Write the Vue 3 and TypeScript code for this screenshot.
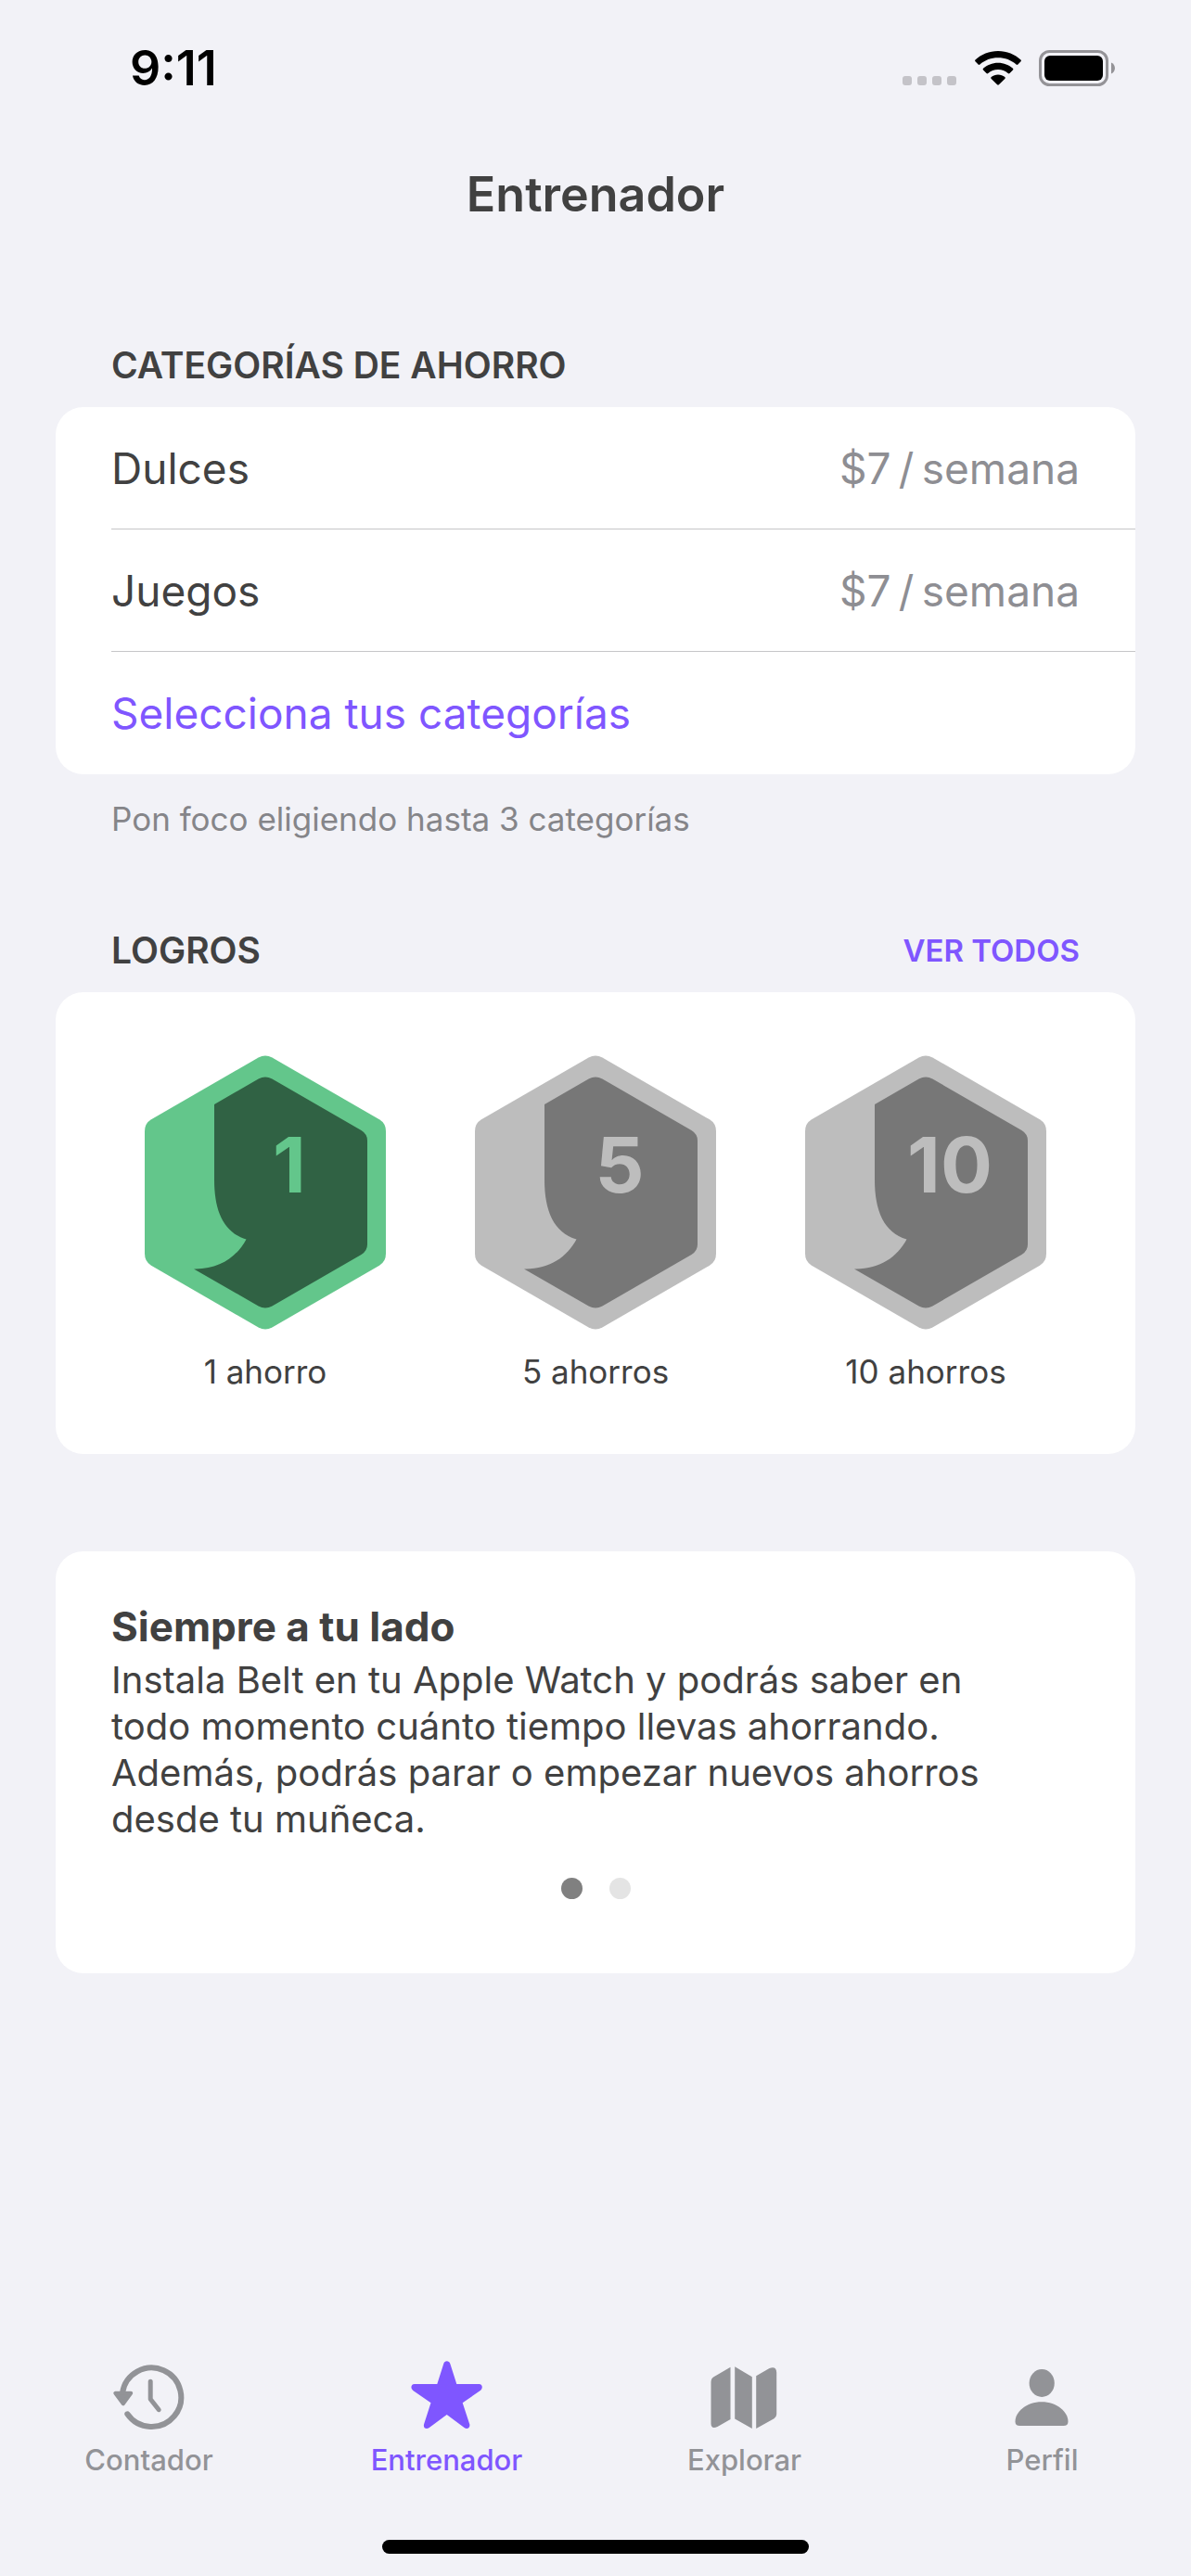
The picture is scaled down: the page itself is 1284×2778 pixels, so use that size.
<script setup lang="ts">
import { ref } from 'vue'

interface Category {
  name: string
  amount: string
}

interface Achievement {
  count: number
  label: string
  unlocked: boolean
}

interface Tip {
  title: string
  body: string
}

type TabIcon = 'history' | 'star' | 'map' | 'person'

interface Tab {
  label: string
  icon: TabIcon
}

// Amounts are set with thin spaces around the slash.
const categories: Category[] = [
  { name: 'Dulces', amount: '$7\u2009/\u2009semana' },
  { name: 'Juegos', amount: '$7\u2009/\u2009semana' },
]

const achievements: Achievement[] = [
  { count: 1, label: '1 ahorro', unlocked: true },
  { count: 5, label: '5 ahorros', unlocked: false },
  { count: 10, label: '10 ahorros', unlocked: false },
]

const tip: Tip = {
  title: 'Siempre a tu lado',
  body: 'Instala Belt en tu Apple Watch y podrás saber en todo momento cuánto tiempo llevas ahorrando. Además, podrás parar o empezar nuevos ahorros desde tu muñeca.',
}

const tabs: Tab[] = [
  { label: 'Contador', icon: 'history' },
  { label: 'Entrenador', icon: 'star' },
  { label: 'Explorar', icon: 'map' },
  { label: 'Perfil', icon: 'person' },
]

const currentTab = ref('Entrenador')
const currentPage = ref(0)
</script>

<template>
  <div class="screen">
    <div class="status-bar">
      <span class="clock">9:11</span>
      <div class="status-icons">
        <span class="signal"><i></i><i></i><i></i><i></i></span>
        <svg class="wifi" viewBox="0 0 50 37" aria-hidden="true">
          <path d="M25 0C34.500 0 43.200 3.600 49.500 9.500Q50.300 10.400 49.500 11.300L46.400 14.500Q45.500 15.300 44.600 14.500C39.300 9.700 32.500 7.200 25 7.200S10.700 9.700 5.400 14.500Q4.500 15.300 3.600 14.500L.5 11.300Q-.3 10.400 .5 9.500C6.800 3.600 15.500 0 25 0Z" />
          <path d="M25 12.700C31.200 12.700 36.800 15 41 18.800Q41.900 19.700 41 20.600L37.500 24Q36.600 24.800 35.700 24C32.800 21.500 29.200 20 25 20S17.200 21.500 14.300 24Q13.400 24.800 12.500 24L9 20.600Q8.100 19.700 9 18.800C13.200 15 18.800 12.700 25 12.700Z" />
          <path d="M25 25.500C27.800 25.500 30.300 26.500 32.300 28.100Q33.200 29 32.300 29.900L25.900 36.300Q25 37.100 24.100 36.300L17.700 29.900Q16.800 29 17.700 28.100C19.700 26.500 22.200 25.500 25 25.500Z" />
        </svg>
        <svg class="battery" viewBox="0 0 82 39" aria-hidden="true">
          <rect x="1.500" y="1.500" width="72" height="36" rx="10" fill="none" stroke="#949397" stroke-width="3" />
          <rect x="6" y="6" width="63" height="27" rx="6" />
          <path d="M78 13.500c5.300 2 5.300 10 0 12z" fill="#949397" />
        </svg>
      </div>
    </div>

    <header class="nav-header">
      <h1>Entrenador</h1>
    </header>

    <main>
      <section class="section">
        <div class="section-head">
          <h2>CATEGORÍAS DE AHORRO</h2>
        </div>
        <div class="card">
          <ul class="rows">
            <li v-for="category in categories" :key="category.name" class="row">
              <span>{{ category.name }}</span>
              <span class="amount">{{ category.amount }}</span>
            </li>
            <li class="row">
              <button type="button" class="select-button">Selecciona tus categorías</button>
            </li>
          </ul>
        </div>
        <p class="note">Pon foco eligiendo hasta 3 categorías</p>
      </section>

      <section class="section">
        <div class="section-head">
          <h2>LOGROS</h2>
          <a href="#logros">VER TODOS</a>
        </div>
        <ul id="logros" class="card badges">
          <li
            v-for="item in achievements"
            :key="item.count"
            class="badge"
            :class="{ unlocked: item.unlocked }"
          >
            <svg viewBox="0 0 260 296" aria-hidden="true">
              <path class="light" d="M122.600 2.400Q130-1.600 137.400 2.400L253 69.300Q260 73.500 260 82V214Q260 222.500 253 226.700L137.400 293.600Q130 297.600 122.600 293.600L7 226.700Q0 222.500 0 214V82Q0 73.500 7 69.300Z" />
              <path class="dark" d="M75 52.900L122.600 25.600Q130 21.400 137.400 25.600L233.500 81Q240 85 240 92V204Q240 211 233.500 215L137.400 270.400Q130 274.600 122.600 270.400L53 230.400C80 231 99 218 109.500 198.500C85 191 75 168 75 134Z" />
              <text x="156" y="148" text-anchor="middle">{{ item.count }}</text>
            </svg>
            <span>{{ item.label }}</span>
          </li>
        </ul>
      </section>

      <section class="card tip">
        <h3>{{ tip.title }}</h3>
        <p>{{ tip.body }}</p>
        <div class="pager">
          <button
            v-for="page in 2"
            :key="page"
            type="button"
            :class="{ active: currentPage === page - 1 }"
            :aria-label="`Página ${page}`"
            @click="currentPage = page - 1"
          ></button>
        </div>
      </section>
    </main>

    <footer>
      <nav class="tabs">
        <button
          v-for="tab in tabs"
          :key="tab.label"
          type="button"
          class="tab"
          :class="{ active: currentTab === tab.label }"
          @click="currentTab = tab.label"
        >
          <svg viewBox="0 0 80 80" aria-hidden="true">
            <g v-if="tab.icon === 'history'" fill="none" stroke="currentColor" stroke-width="6" stroke-linecap="round" stroke-linejoin="round">
              <path d="M11 35.500A31.800 31.800 0 1 1 16.300 58.300" />
              <path d="M41.200 23.300V42.300L50.200 53.700" stroke-width="5" />
              <path d="M3.300 35.800H20.200L11.800 47.200Z" fill="currentColor" stroke-width="4" />
            </g>
            <path
              v-else-if="tab.icon === 'star'"
              fill="currentColor"
              d="M36.300 4C37.300 .2 42.200 .2 43.300 4L50.300 26H74.500C78.500 26.300 78.700 30.700 75.800 33L56.700 46.300L64.300 69.500C65 73.500 61.500 75 58.500 73L39.700 59L20.800 73C17.500 75 14.200 73.500 15 69.500L22.500 46.300L3.300 33C.3 30.500 1 26.300 4.800 26H29.300Z"
            />
            <path
              v-else-if="tab.icon === 'map'"
              fill="currentColor"
              d="M24.500 7.800V64L10.500 72Q3.500 75 3.500 68.500V24Q3.500 20 6.500 18.200ZM29.200 7.300L47.800 18.300V74L29.200 63.500ZM52.200 17.200L66.500 9Q74 6.500 74.200 13.500V58.500Q74.200 61.500 71.500 63.200L52.200 74Z"
            />
            <g v-else fill="currentColor">
              <ellipse cx="39.200" cy="25" rx="13.600" ry="15" />
              <path d="M39 45.300C55.500 45.300 67.500 56 67.500 66.500Q67.500 71 62.500 71H15.500Q10.500 71 10.500 66.500C10.500 56 22.500 45.300 39 45.300Z" />
            </g>
          </svg>
          <span>{{ tab.label }}</span>
        </button>
      </nav>
      <div class="home-indicator"></div>
    </footer>
  </div>
</template>

<style>
body {
  background: #f2f2f7;
}
</style>

<style scoped>
.screen {
  display: flex;
  flex-direction: column;
  min-height: 100vh;
  color: #414141;
  font-family: Inter, 'Liberation Sans', sans-serif;
}

h1,
h2,
h3,
p,
ul {
  margin: 0;
  padding: 0;
}

ul {
  list-style: none;
}

button {
  padding: 0;
  border: 0;
  background: none;
  color: inherit;
  font: inherit;
  cursor: pointer;
}

.status-bar {
  display: flex;
  align-items: center;
  justify-content: space-between;
  height: 146px;
  padding: 0 82px 0 140px;
  color: #000;
}

.clock {
  font-size: 52px;
  font-weight: 600;
}

.status-icons {
  display: flex;
  align-items: flex-end;
}

.signal {
  display: flex;
  gap: 6px;
  margin: 0 20px 1px 0;
}

.signal i {
  width: 10px;
  height: 10px;
  border-radius: 3px;
  background: #c4c3c8;
}

.wifi {
  width: 50px;
  height: 37px;
  margin: 0 19px 1px 0;
}

.battery {
  width: 82px;
  height: 39px;
}

.nav-header {
  display: flex;
  align-items: center;
  justify-content: center;
  height: 126px;
}

h1 {
  font-size: 52px;
  font-weight: 600;
}

main {
  padding: 0 60px;
}

.section {
  padding-top: 98px;
}

.section-head {
  display: flex;
  align-items: center;
  justify-content: space-between;
  margin-bottom: 21px;
  padding: 0 60px;
  line-height: 48px;
}

h2 {
  font-size: 39px;
  font-weight: 600;
}

.section-head a {
  color: #7f56ff;
  font-size: 33px;
  font-weight: 600;
  text-decoration: none;
}

.card {
  border-radius: 30px;
  background: #fff;
}

.rows {
  padding-left: 60px;
  font-size: 46px;
}

.row {
  display: flex;
  align-items: center;
  justify-content: space-between;
  box-sizing: border-box;
  height: 132px;
  padding-right: 60px;
  border-bottom: 1px solid #c6c6c8;
}

.row:last-child {
  border-bottom: 0;
}

.amount {
  color: #8e8e93;
}

.select-button {
  color: #7f56ff;
}

.note {
  margin-top: 28px;
  padding: 0 60px;
  color: #858589;
  font-size: 35px;
  line-height: 40px;
}

.badges {
  display: grid;
  grid-template-columns: repeat(3, 1fr);
  padding: 68px 48px 69px;
}

.badge {
  display: flex;
  flex-direction: column;
  align-items: center;
  gap: 25px;
  font-size: 35px;
  line-height: 40px;
}

.badge svg {
  width: 260px;
  height: 296px;
}

.light,
.badge text {
  fill: #bdbdbd;
}

.dark {
  fill: #777;
}

.unlocked .light,
.unlocked text {
  fill: #63c68b;
}

.unlocked .dark {
  fill: #306244;
}

.badge text {
  font-size: 83px;
  font-weight: 700;
}

.tip {
  margin-top: 105px;
  padding: 56px 60px 80px;
  line-height: 50px;
}

h3 {
  font-size: 44px;
  font-weight: 700;
}

.tip p {
  margin-top: 8px;
  padding-right: 60px;
  font-size: 40px;
}

.pager {
  display: flex;
  justify-content: center;
  gap: 29px;
  margin-top: 38px;
}

.pager button {
  width: 23px;
  height: 23px;
  border-radius: 50%;
  background: #e4e4e4;
}

.pager .active {
  background: #808080;
}

footer {
  margin-top: auto;
}

.tabs {
  display: grid;
  grid-template-columns: repeat(4, 1fr);
}

.tab {
  display: flex;
  flex-direction: column;
  align-items: center;
  gap: 8px;
  color: #929397;
  font-size: 31px;
  font-weight: 500;
  line-height: 40px;
}

.tab.active {
  color: #7f56ff;
}

.tab svg {
  width: 80px;
  height: 80px;
}

.home-indicator {
  width: 460px;
  height: 15px;
  margin: 66px auto 24px;
  border-radius: 8px;
  background: #000;
}
</style>
